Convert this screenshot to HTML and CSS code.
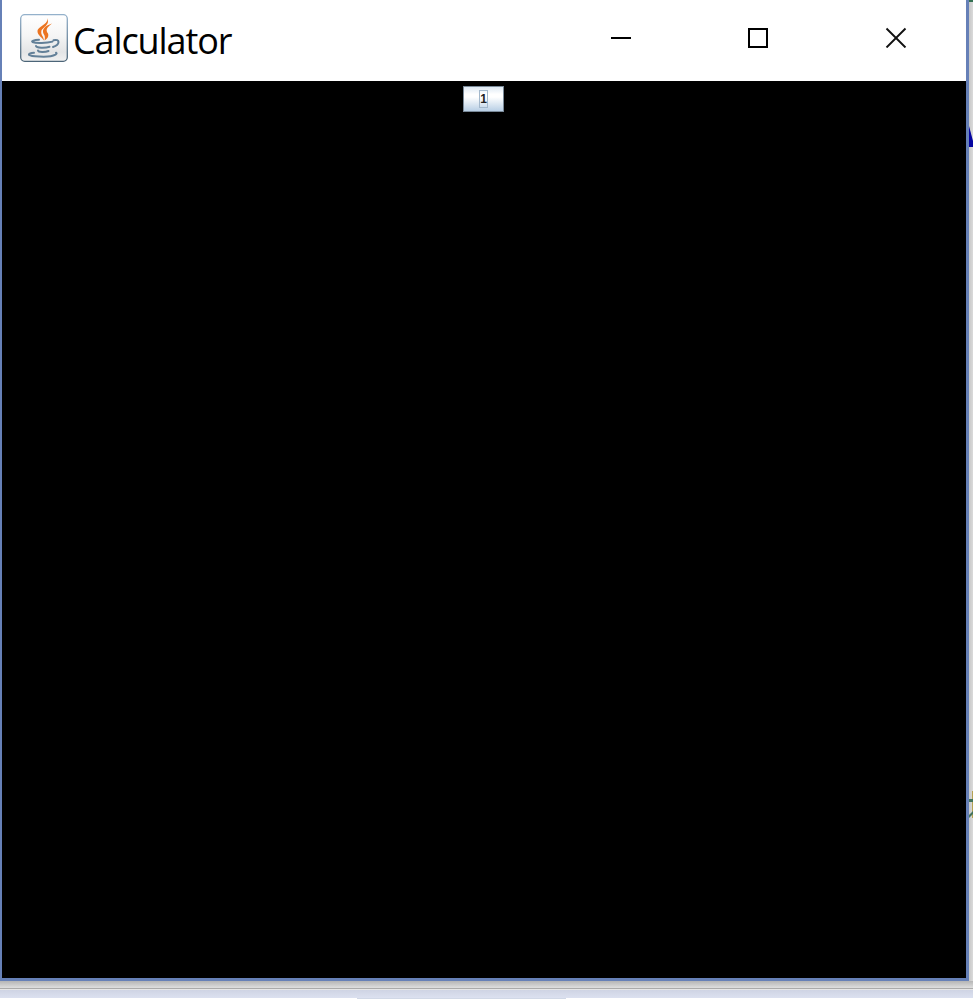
FILE: index.html
```html
<!DOCTYPE html>
<html lang="en">
<head>
<meta charset="utf-8">
<title>Calculator</title>
<link rel="stylesheet" href="styles.css">
</head>
<body>
<div class="desktop">
  <main class="window">
    <header class="titlebar">
      <svg class="app-icon" viewBox="0 0 48 48" aria-hidden="true">
        <defs>
          <linearGradient id="tile" x1="0" y1="0" x2="0" y2="1"><stop offset="0" stop-color="#fff"/><stop offset=".45" stop-color="#f5f5f5"/><stop offset=".8" stop-color="#e4e5e6"/><stop offset="1" stop-color="#f1f1f1"/></linearGradient>
          <linearGradient id="edge" x1="0" y1="0" x2="0" y2="1"><stop offset="0" stop-color="#94b1cb"/><stop offset="1" stop-color="#4c6578"/></linearGradient>
        </defs>
        <rect x=".7" y=".7" width="46.6" height="46.6" rx="4" fill="url(#tile)" stroke="url(#edge)" stroke-width="1.3"/>
        <path d="M27 4C29.500 10 17.500 12 17.500 17.500C17.500 21 22 23.500 24 26.500C23.500 22 20.800 21 21.300 17.500C21.800 13.500 31 11 27 4ZM32 9.500C27 11 22.500 14 23 18C23.300 20.500 26 21.500 24.500 26.500C27.500 24.500 29 22.500 28 19.500C26 16.500 25.500 14.500 32 9.500Z" fill="#ec7420"/>
        <g fill="none" stroke="#638098" stroke-linecap="round" stroke-width="2">
          <path d="M19 25.800C14 26 11 27 12.500 28C16 29.500 27 29 32.500 27.600"/>
          <path d="M33.500 26.200C40 24.500 40.500 30.500 33 33"/>
          <path d="M16 32C16.500 34 25 34.200 29.500 32.700"/>
          <path d="M18 36.500C18.500 38.500 25 38.500 28.500 37"/>
          <path d="M14 38.800C7 39.500 7 41.500 15 42.200C23 43 32 42.500 35.500 40.600C36.800 39.800 37 39.300 36 38.700"/>
        </g>
      </svg>
      <h1 class="title">Calculator</h1>
      <div class="controls">
        <svg viewBox="0 0 22 22" aria-hidden="true"><path d="M1 12H21" stroke="#000" stroke-width="2"/></svg>
        <svg viewBox="0 0 22 22" aria-hidden="true"><path d="M2 3H20V21H2Z" fill="none" stroke="#000" stroke-width="2"/></svg>
        <svg viewBox="0 0 22 22" aria-hidden="true"><path d="M1.500 2.500L20.500 21.500M20.500 2.500L1.500 21.500" stroke="#111" stroke-width="1.900"/></svg>
      </div>
    </header>
    <section class="content"><button class="key"><span>1</span></button></section>
  </main>
  <aside class="behind-right">
    <svg viewBox="0 0 4 981" aria-hidden="true">
      <path d="M0 0H4V2H0Z" fill="#337052"/>
      <path d="M0 126L4 141V147H0Z" fill="#0505a0"/>
      <path d="M3 791H4V818H3Z" fill="#b6a252"/>
      <path d="M0 799H4V802H0ZM0 815L4 811V814L0 818Z" fill="#42735c"/>
    </svg>
  </aside>
  <footer class="behind-bottom">
    <div class="shade"></div><div class="rule"></div><div class="light"></div><div class="bar"></div><div class="tab"></div>
  </footer>
</div>
</body>
</html>
```
FILE: styles.css
```css
* { box-sizing: border-box; }
html, body { margin: 0; overflow: hidden; }
.desktop { display: grid; grid-template-columns: 969px 4px; grid-template-rows: 981px 18px; width: 973px; height: 999px; }
.window { display: flex; flex-direction: column; border: solid #6680b7; border-width: 0 3px 3px 2px; background: #000; }
.titlebar { display: flex; align-items: center; height: 81px; flex: none; padding: 0 59px 5px 18px; background: #fff; }
.app-icon { width: 48px; height: 48px; flex: none; }
.title { margin: 5px 0 0 5px; font: 400 36px/48px "Open Sans", sans-serif; letter-spacing: -1.1px; color: #000; }
.controls { display: grid; grid-template-columns: 137px 138px 22px; height: 24px; margin-left: auto; }
.controls svg { width: 22px; height: 22px; }
.content { flex: 1; display: flex; justify-content: center; align-items: flex-start; padding: 5px 1px 0 0; }
.key { width: 41px; height: 26px; padding: 0; border: 1px solid #7a8a99; background: linear-gradient(#dde8f3 0, #fff 30%, #fff 42%, #b8cfe5 100%); display: flex; align-items: center; justify-content: center; }
.key span { width: 9px; height: 18px; border: 1px solid #a3b8cc; font: 700 12px/17px "Liberation Sans", sans-serif; color: #222; text-align: center; display: flex; justify-content: center; }
.behind-right { background: linear-gradient(90deg, #c7c7c7, #dadada); }
.behind-right svg { display: block; width: 4px; height: 981px; }
.behind-bottom { grid-column: 1 / 3; background: #fff; }
.shade { height: 7px; background: linear-gradient(#b5b5b5, #dedede); }
.rule { height: 1px; background: #aaa; }
.light { height: 1px; background: #e6e6e6; }
.bar { height: 8px; background: linear-gradient(#cfd4e4, #dce1f0); }
.tab { width: 209px; height: 1px; margin-left: 357px; background: #d1d8e6; }
```
